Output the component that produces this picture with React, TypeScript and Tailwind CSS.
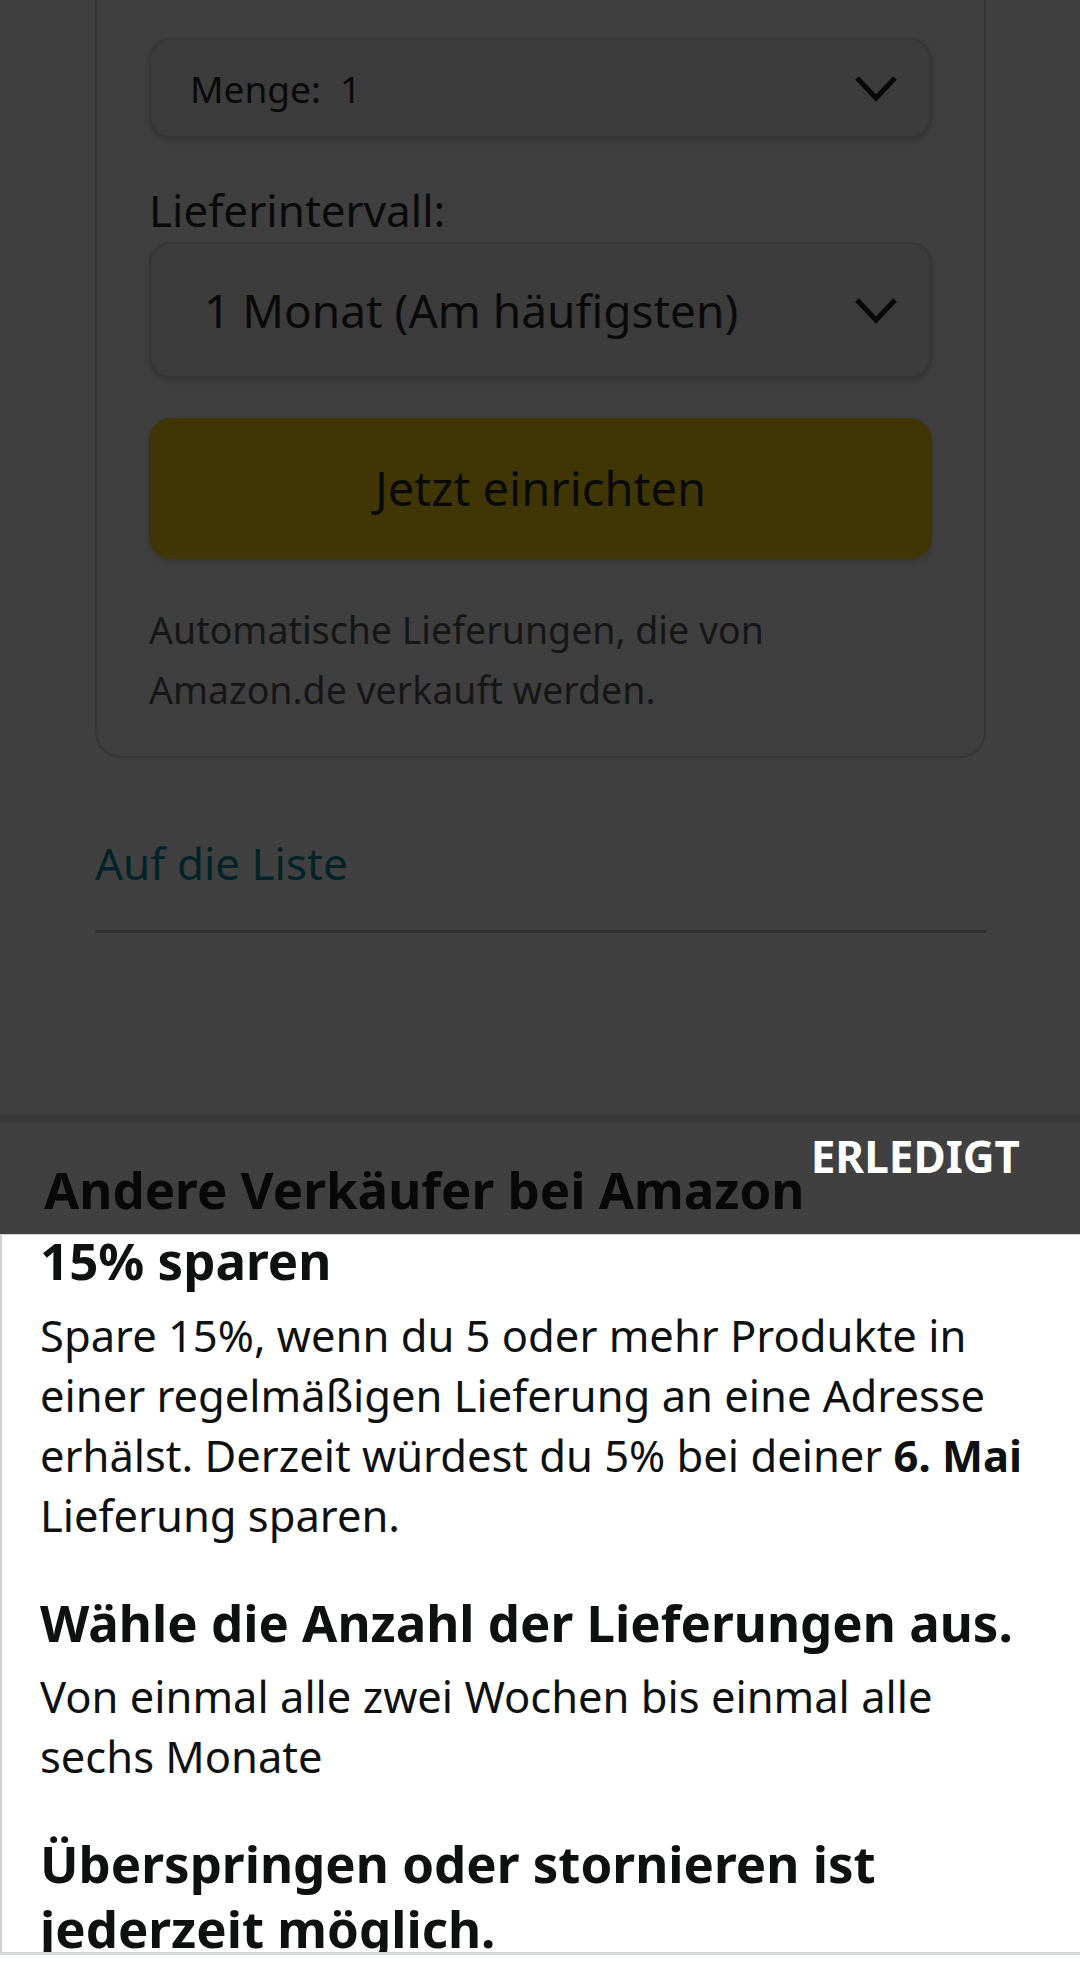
const font = "font-['Noto_Sans','Open_Sans',sans-serif]";

function Chevron() {
  return (
    <svg width="44" height="28" viewBox="0 0 44 28" fill="none">
      <polyline points="3,4 22,24 41,4" stroke="#080808" strokeWidth="5" />
    </svg>
  );
}

export default function App() {
  return (
    <div className={`${font} flex h-[1962px] w-[1080px] flex-col overflow-hidden bg-white`}>
      {/* dimmed page behind the sheet */}
      <div className="h-[1114px] flex-none overflow-hidden bg-[#404040]">
        <div className="ml-[95px] w-[891px] rounded-b-[26px] border-2 border-t-0 border-[#363636] bg-[#3f3f3f] px-[52px] pb-[36px] pt-[38px]">
          <div className="flex h-[100px] items-center justify-between rounded-[22px] border-2 border-[#363636] bg-[#3c3c3c] pl-[39px] pr-[32px] shadow-[0_3px_5px_rgba(0,0,0,0.18)]">
            <span className="text-[37px] leading-none text-[#0a0a0a]">Menge:&nbsp; 1</span>
            <Chevron />
          </div>

          <div className="mt-[44px] text-[44px] leading-[57px] text-[#0a0a0a]">Lieferintervall:</div>

          <div className="mt-[3px] flex h-[136px] items-center justify-between rounded-[22px] border-2 border-[#363636] bg-[#3c3c3c] pl-[53px] pr-[32px] shadow-[0_3px_5px_rgba(0,0,0,0.18)]">
            <span className="text-[46px] leading-none text-[#0a0a0a]">1 Monat (Am häufigsten)</span>
            <Chevron />
          </div>

          <button className="mt-[40px] flex h-[141px] w-full items-center justify-center rounded-[22px] bg-[#403605] text-[47px] text-[#0a0a0a] shadow-[0_3px_5px_rgba(0,0,0,0.15)]">
            Jetzt einrichten
          </button>

          <p className="mt-[41px] text-[37.5px] leading-[60px] text-[#161616]">
            Automatische Lieferungen, die von
            <br />
            Amazon.de verkauft werden.
          </p>
        </div>

        <div className="ml-[95px] w-[891px]">
          <div className="mt-[75px] text-[44px] leading-[60px] text-[#042328]">Auf die Liste</div>
          <div className="mt-[37px] h-[3px] bg-[#303030]" />
        </div>
      </div>

      <div className="h-[8px] flex-none bg-[#383838]" />

      {/* sheet header */}
      <div className="flex h-[112px] flex-none items-start justify-between bg-[#404040] pl-[44px] pr-[60px]">
        <h2 className="mt-[37px] text-[51px] font-bold leading-[60px] text-[#080808]">Andere Verkäufer bei Amazon</h2>
        <button className="mt-[9px] text-[44px] font-bold leading-[50px] text-white">ERLEDIGT</button>
      </div>

      {/* sheet body */}
      <div className="h-[718px] flex-none overflow-hidden border-l-2 border-t border-[#d0d0d0] bg-white pl-[38px] pr-[40px] text-[#0f1111]">
        <h3 className="text-[51px] font-bold leading-[50px]">15% sparen</h3>
        <p className="mt-[20px] text-[43.5px] leading-[60px]">
          Spare 15%, wenn du 5 oder mehr Produkte in einer regelmäßigen Lieferung an eine Adresse erhälst. Derzeit
          würdest du 5% bei deiner <b>6. Mai</b> Lieferung sparen.
        </p>

        <h3 className="mt-[45px] text-[51px] font-bold leading-[65px]">Wähle die Anzahl der Lieferungen aus.</h3>
        <p className="mt-[11px] text-[43.5px] leading-[60px]">
          Von einmal alle zwei Wochen bis einmal alle sechs Monate
        </p>

        <h3 className="mt-[45px] text-[51px] font-bold leading-[65px]">Überspringen oder stornieren ist jederzeit möglich.</h3>
      </div>

      <div className="h-[3px] flex-none bg-[#d5d9d9]" />
      <div className="flex-1 bg-white" />
    </div>
  );
}
